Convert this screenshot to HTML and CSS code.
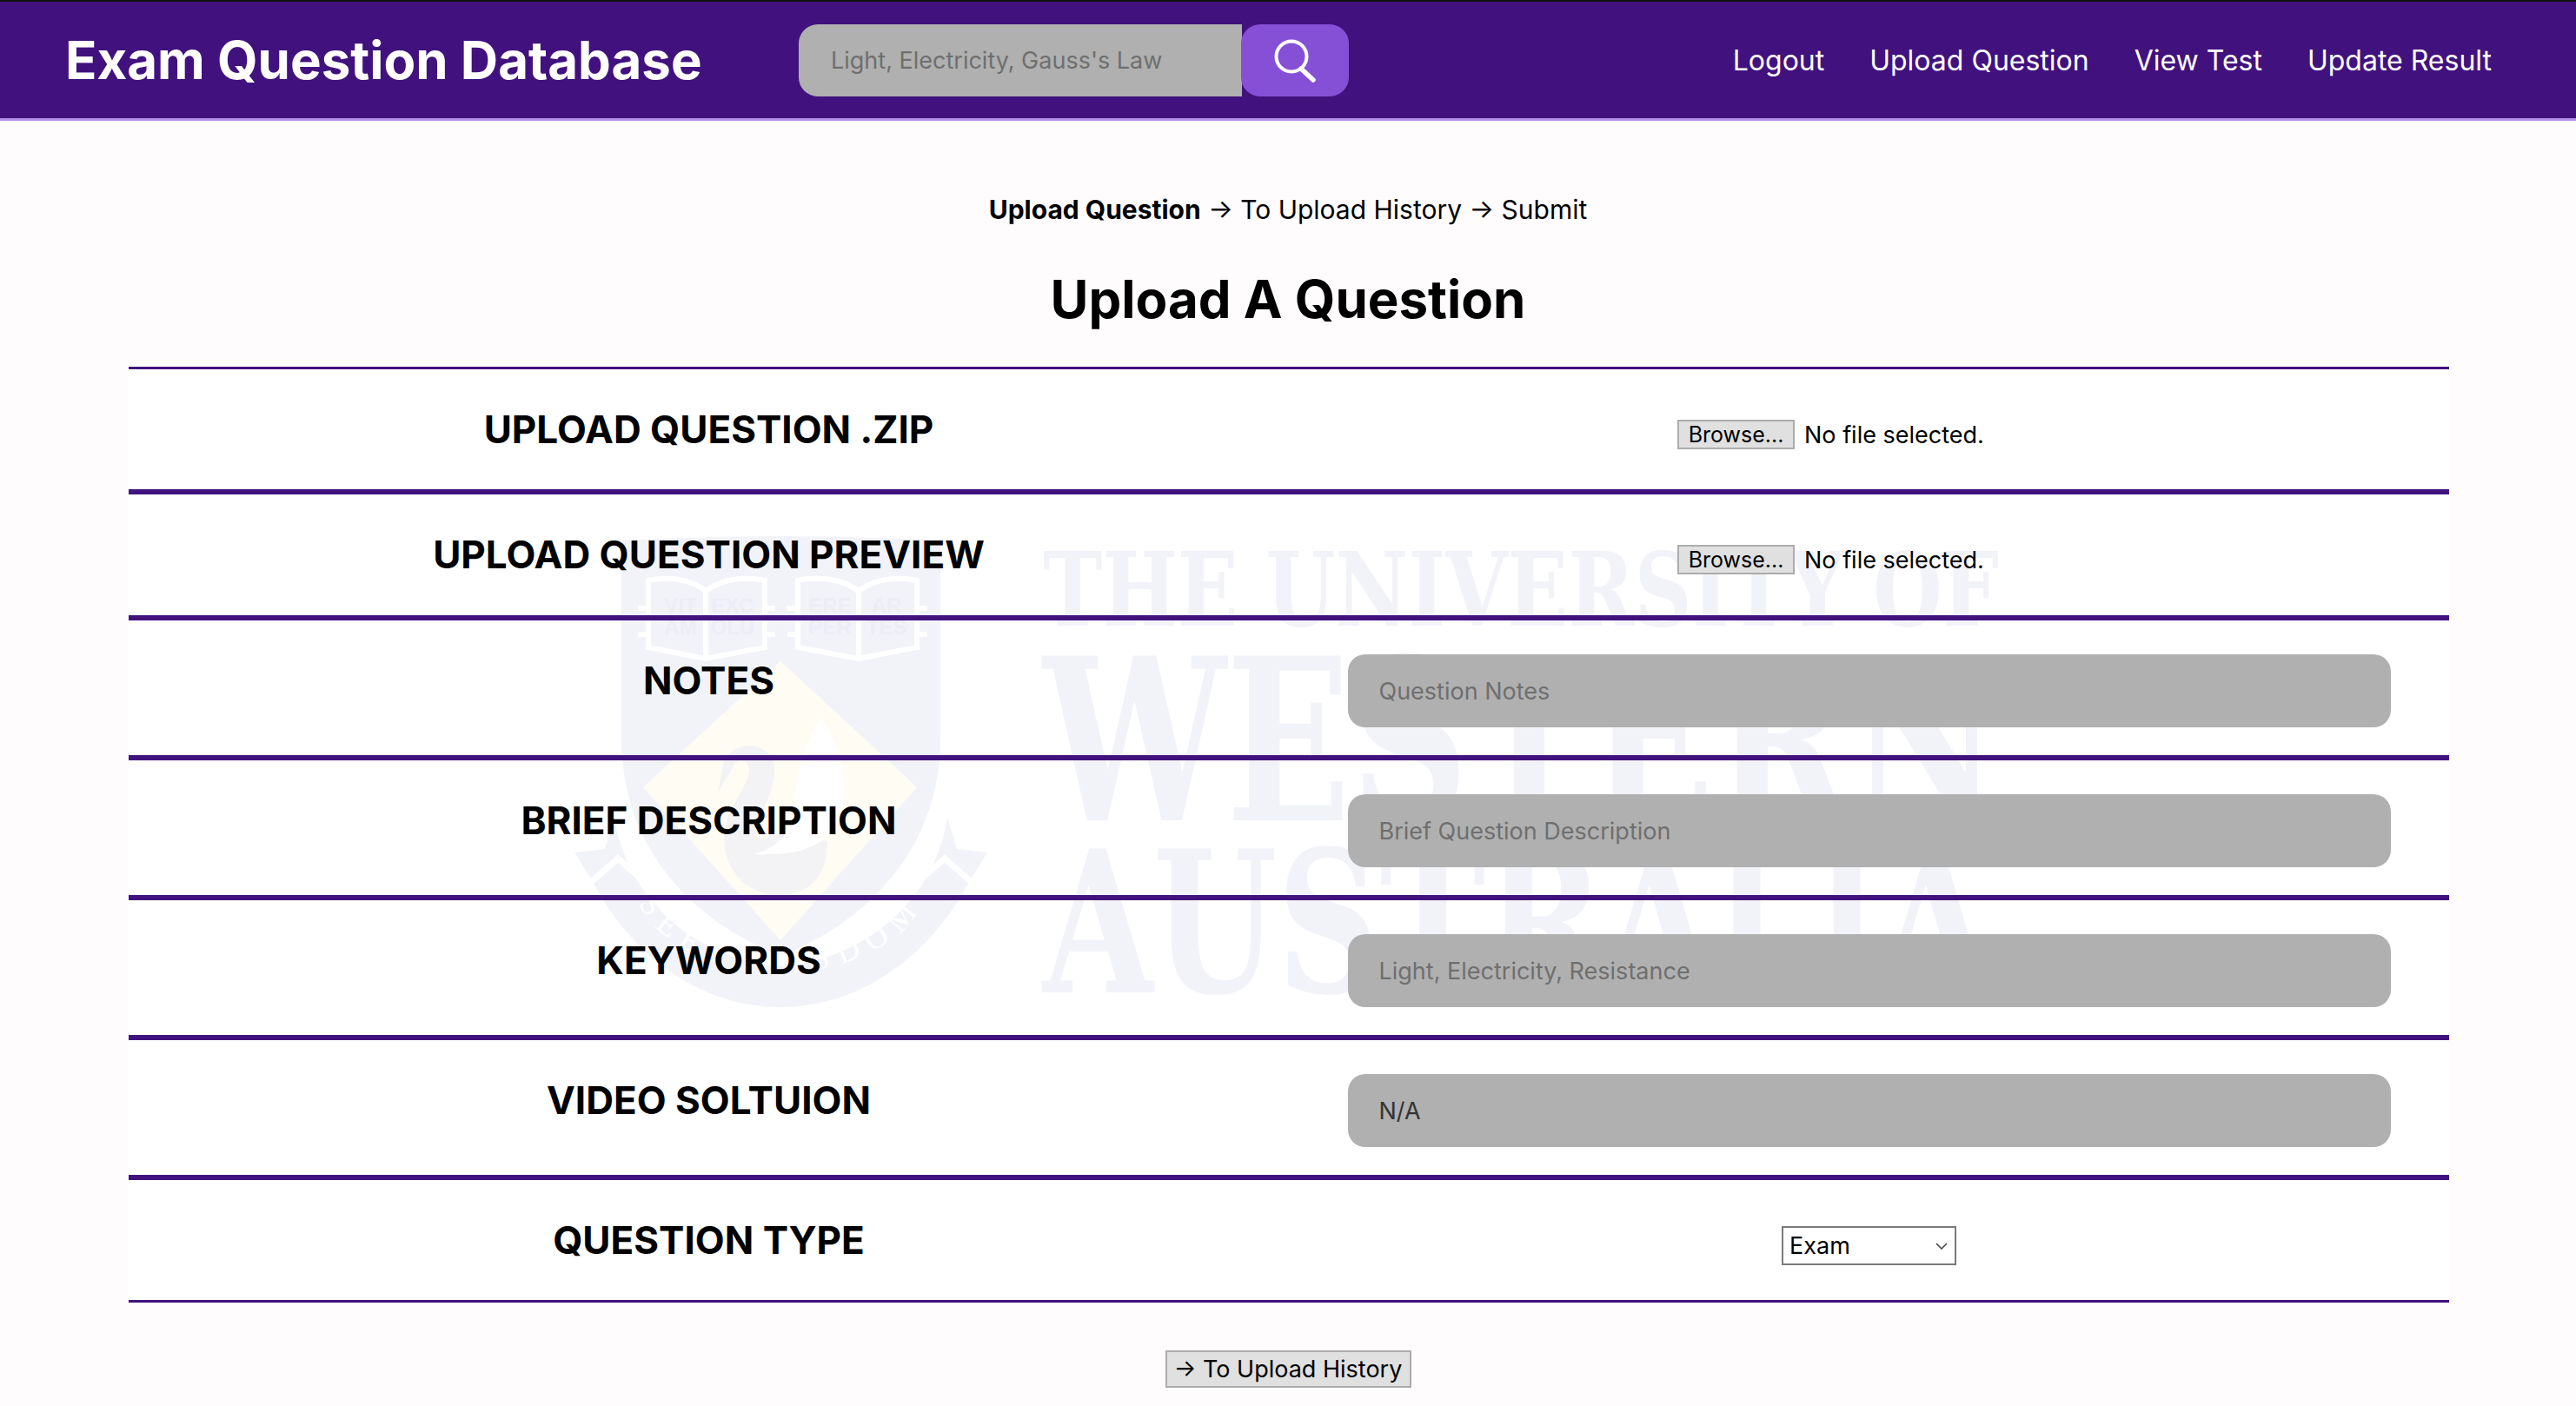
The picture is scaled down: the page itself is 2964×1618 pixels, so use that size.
FILE: index.html
```html
<!DOCTYPE html>
<html lang="en">
<head>
  <meta charset="UTF-8">
  <meta name="viewport" content="width=device-width, initial-scale=1.0">
  <title>Exam Question Database</title>
  <link rel="stylesheet" href="styles.css">
</head>
<body>
  <header class="topbar">
    <h1 class="brand">Exam Question Database</h1>
    <form class="search">
      <input class="search-input" type="text" placeholder="Light, Electricity, Gauss's Law">
      <button class="search-btn" type="button" aria-label="Search">
        <svg width="50" height="50" viewBox="0 0 50 50" fill="none" stroke="#fff" stroke-linecap="round">
          <circle cx="21" cy="20" r="17.5" stroke-width="4"/>
          <line x1="32" y1="34" x2="46" y2="47" stroke-width="5.5"/>
        </svg>
      </button>
    </form>
    <nav class="topnav">
      <a href="#" class="nav-logout">Logout</a>
      <a href="#" class="nav-upload">Upload Question</a>
      <a href="#" class="nav-view">View Test</a>
      <a href="#" class="nav-update">Update Result</a>
    </nav>
  </header>

  <main class="content">
    <p class="steps"><b>Upload Question</b> → To Upload History → Submit</p>
    <h2 class="page-title">Upload A Question</h2>

    <section class="upload-table">
      <!-- faint crest and university name behind the rows -->
      <svg class="watermark" viewBox="148 422 2670 1077" width="2670" height="1077">
        <path class="wm-ribbon" d="M707 941 L696 977 L661 981 L682 1015 C730 1105 810 1159 898 1159 C986 1159 1067 1105 1115 1015 L1136 981 L1101 977 L1090 941 C1075 1040 990 1105 898 1112 C806 1105 722 1040 707 941 Z"/>
        <path class="wm-chevron" d="M678 1017 L711 988 L742 1015 M1055 1015 L1087 988 L1120 1017"/>
        <path class="wm-shield" d="M715 622 Q898 612 1082 622 L1082 850 C1082 975 1000 1060 898 1100 C796 1060 715 975 715 850 Z"/>
        <polygon class="wm-diamond" points="898,761 1055,906 898,1082 740,906"/>
        <path class="wm-swan" d="M832 880 C838 858 868 850 885 868 C902 888 880 925 872 950 C866 975 880 962 900 958 L952 968 C952 1010 930 1030 895 1030 C860 1030 828 1000 834 955 C838 925 862 905 862 885 C860 872 846 872 842 885 L826 912 Z"/>
        <path class="wm-wing" d="M944 826 C968 860 975 900 968 935 C955 975 920 985 868 983 C900 975 915 950 915 915 C918 880 930 850 944 826 Z"/>
        <path class="wm-book" d="M746 668 Q785 660 812 680 Q840 660 880 668 L880 745 L812 758 L746 745 Z M918 668 Q960 660 988 680 Q1016 660 1055 668 L1055 745 L988 758 L918 745 Z M734 700 H746 M734 730 H746 M880 700 H892 M880 730 H892 M906 700 H918 M906 730 H918 M1055 700 H1067 M1055 730 H1067 M812 680 V756 M988 680 V756"/>
        <text class="wm-book-text" x="783" y="705">VIT</text>
        <text class="wm-book-text" x="843" y="705">EXC</text>
        <text class="wm-book-text" x="783" y="730">AM</text>
        <text class="wm-book-text" x="843" y="730">OLU</text>
        <text class="wm-book-text" x="955" y="705">ERE</text>
        <text class="wm-book-text" x="1020" y="705">AR</text>
        <text class="wm-book-text" x="955" y="730">PER</text>
        <text class="wm-book-text" x="1020" y="730">TES</text>
        <path id="wm-motto" d="M735 1040 C790 1145 1005 1145 1062 1040" fill="none"/>
        <text class="wm-motto-text"><textPath href="#wm-motto" startOffset="50%" text-anchor="middle">SEEK WISDOM</textPath></text>
        <text class="wm-name" x="1200" y="720" textLength="1100" lengthAdjust="spacingAndGlyphs">THE UNIVERSITY OF</text>
        <text class="wm-name wm-name-big" x="1200" y="944" textLength="1100" lengthAdjust="spacingAndGlyphs">WESTERN</text>
        <text class="wm-name wm-name-mid" x="1200" y="1142" textLength="1090" lengthAdjust="spacingAndGlyphs">AUSTRALIA</text>
      </svg>

      <div class="row row-file">
        <div class="row-label">UPLOAD QUESTION .ZIP</div>
        <div class="row-field file-cell">
          <div class="file-field"><button type="button" class="browse-btn">Browse...</button><span>No file selected.</span></div>
        </div>
      </div>
      <div class="row row-file">
        <div class="row-label">UPLOAD QUESTION PREVIEW</div>
        <div class="row-field file-cell">
          <div class="file-field"><button type="button" class="browse-btn">Browse...</button><span>No file selected.</span></div>
        </div>
      </div>
      <div class="row row-text">
        <div class="row-label">NOTES</div>
        <div class="row-field"><input class="text-input" type="text" placeholder="Question Notes"></div>
      </div>
      <div class="row row-text">
        <div class="row-label">BRIEF DESCRIPTION</div>
        <div class="row-field"><input class="text-input" type="text" placeholder="Brief Question Description"></div>
      </div>
      <div class="row row-text">
        <div class="row-label">KEYWORDS</div>
        <div class="row-field"><input class="text-input" type="text" placeholder="Light, Electricity, Resistance"></div>
      </div>
      <div class="row row-text">
        <div class="row-label">VIDEO SOLTUION</div>
        <div class="row-field"><input class="text-input" type="text" value="N/A"></div>
      </div>
      <div class="row row-select">
        <div class="row-label">QUESTION TYPE</div>
        <div class="row-field select-cell">
          <div class="select-wrap">
            <select class="type-select">
              <option>Exam</option>
              <option>Test</option>
            </select>
            <svg class="select-arrow" width="14" height="8" viewBox="0 0 14 8" fill="none" stroke="#444" stroke-width="1.5"><path d="M1 1 L7 7 L13 1"/></svg>
          </div>
        </div>
      </div>
    </section>

    <div class="actions">
      <button type="button" class="next-btn">→ To Upload History</button>
    </div>
  </main>
</body>
</html>
```

FILE: styles.css
```css
html, body {
  margin: 0;
  background: #fffcfd;
  font-family: Inter, "Liberation Sans", sans-serif;
  color: #000;
}

/* top bar */
.topbar {
  height: 139px;
  box-sizing: border-box;
  border-top: 2px solid #111;
  border-bottom: 3px solid #b48fe8;
  background: #41127e;
  padding: 0 97px 0 75px;
  display: flex;
  align-items: center;
}
.brand {
  width: 844px;
  margin: 0;
  flex: none;
  color: #fff;
  font-size: 60px;
  font-weight: 700;
  white-space: nowrap;
}
.search {
  width: 633px;
  height: 83px;
  display: flex;
  margin-top: 1px;
}
.search-input {
  flex: 1;
  min-width: 0;
  border: 0;
  outline: 0;
  background: #b0b0b0;
  border-radius: 22px 0 0 22px;
  padding: 0 0 0 37px;
  font: 27px Inter, sans-serif;
}
.search-input::placeholder,
.text-input::placeholder {
  color: #6f6f6f;
  opacity: 1;
}
.search-btn {
  width: 124px;
  border: 0;
  padding: 0;
  background: #8650d6;
  border-radius: 22px;
  margin-left: -1px;
  display: flex;
  align-items: center;
  justify-content: center;
}
.topnav {
  margin-left: auto;
  display: flex;
  gap: 52px;
}
.topnav a {
  color: #fff;
  text-decoration: none;
  font-size: 32px;
  white-space: nowrap;
}

/* heading area */
.steps {
  margin: 0;
  padding-top: 80px;
  text-align: center;
  font-size: 30px;
  line-height: 44px;
}
.page-title {
  margin: 0;
  padding-top: 36px;
  text-align: center;
  font-size: 60px;
  font-weight: 700;
  line-height: 90px;
  height: 123px;
}

/* rows */
.upload-table {
  position: relative;
  margin: 0 146px 0 148px;
  background: #fff;
}
.watermark {
  position: absolute;
  left: 0;
  top: 0;
}
.wm-ribbon { fill: #f2f3f9; }
.wm-chevron { fill: none; stroke: #fff; stroke-width: 7; }
.wm-shield { fill: #f2f3f9; }
.wm-diamond { fill: #fffdf3; }
.wm-swan { fill: #f3f3f5; }
.wm-wing { fill: #fff; }
.wm-book { fill: #f2f3f9; stroke: #fff; stroke-width: 6; }
.wm-book-text {
  fill: #ecedf5;
  font: 700 24px "Liberation Sans", sans-serif;
  text-anchor: middle;
}
.wm-motto-text {
  fill: #fff;
  font: 36px "Liberation Serif", serif;
  letter-spacing: 12px;
}
.wm-name {
  fill: #f2f3f9;
  font: 700 118px "DejaVu Serif", serif;
}
.wm-name-big { font-size: 260px; }
.wm-name-mid { font-size: 226px; }

.row {
  position: relative;
  display: grid;
  grid-template-columns: 1fr 1fr;
  box-sizing: border-box;
  border-bottom: 6px solid #41127e;
}
.row:first-of-type {
  border-top: 3px solid #41127e;
}
.row-file { height: 145px; }
.row-file:first-of-type { height: 147px; }
.row-text { height: 161px; }
.row-select {
  height: 141px;
  border-bottom-width: 3px;
}
.row-label {
  padding-top: 43px;
  text-align: center;
  font-size: 44px;
  font-weight: 700;
  line-height: 52px;
  white-space: nowrap;
}
.row-field {
  display: flex;
  justify-content: center;
  align-items: flex-start;
  padding-top: 39px;
}
.file-cell { padding-top: 58px; }
.select-cell { padding-top: 53px; }

.file-field {
  width: 441px;
  display: flex;
  align-items: center;
  gap: 11px;
  font-size: 27px;
  white-space: nowrap;
}
.browse-btn {
  width: 135px;
  height: 34px;
  padding: 0;
  background: #e0e0e0;
  border: 2px solid #acacac;
  font: 25px Inter, sans-serif;
  color: #000;
}
.text-input {
  width: 1200px;
  height: 84px;
  box-sizing: border-box;
  border: 0;
  outline: 0;
  padding: 0 36px;
  background: #b0b0b0;
  border-radius: 20px;
  font: 27px Inter, sans-serif;
  color: #333;
}
.select-wrap { position: relative; }
.type-select {
  display: block;
  width: 201px;
  height: 45px;
  box-sizing: border-box;
  appearance: none;
  border: 2px solid #7a7a7a;
  border-radius: 0;
  background: #fff;
  padding: 0 7px;
  font: 27px Inter, sans-serif;
  color: #000;
}
.select-arrow {
  position: absolute;
  right: 10px;
  top: 19px;
  pointer-events: none;
}

.actions {
  display: flex;
  justify-content: center;
  padding: 55px 0 21px;
}
.next-btn {
  width: 283px;
  height: 43px;
  padding: 0;
  background: #e0e0e0;
  border: 2px solid #acacac;
  font: 27px Inter, sans-serif;
  color: #000;
  white-space: nowrap;
}
```
